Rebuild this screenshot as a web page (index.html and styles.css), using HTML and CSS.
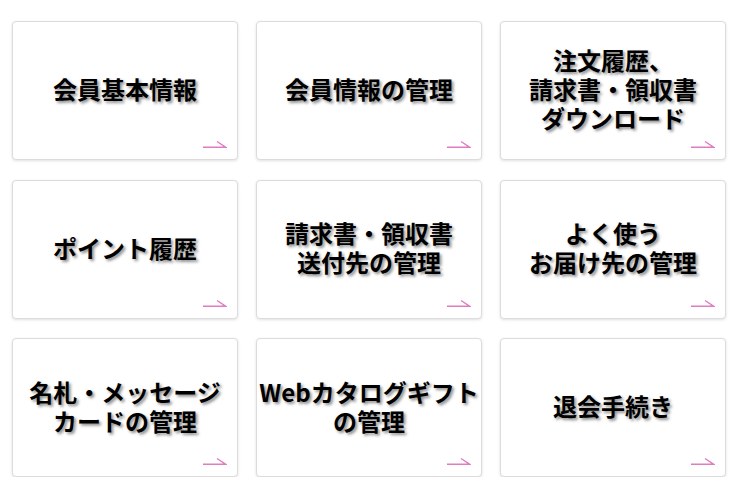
FILE: index.html
```html
<!DOCTYPE html>
<html lang="ja">
<head>
<meta charset="utf-8">
<link rel="stylesheet" href="styles.css">
</head>
<body>
<div class="grid">
  <a class="card"><span class="label">会員基本情報</span><svg class="arrow" viewBox="0 0 24 8"><path d="M0 7.2H22.5L14 1.5"/></svg></a>
  <a class="card"><span class="label">会員情報の管理</span><svg class="arrow" viewBox="0 0 24 8"><path d="M0 7.2H22.5L14 1.5"/></svg></a>
  <a class="card"><span class="label">注文履歴、<br>請求書・領収書<br>ダウンロード</span><svg class="arrow" viewBox="0 0 24 8"><path d="M0 7.2H22.5L14 1.5"/></svg></a>
  <a class="card"><span class="label">ポイント履歴</span><svg class="arrow" viewBox="0 0 24 8"><path d="M0 7.2H22.5L14 1.5"/></svg></a>
  <a class="card"><span class="label">請求書・領収書<br>送付先の管理</span><svg class="arrow" viewBox="0 0 24 8"><path d="M0 7.2H22.5L14 1.5"/></svg></a>
  <a class="card"><span class="label">よく使う<br>お届け先の管理</span><svg class="arrow" viewBox="0 0 24 8"><path d="M0 7.2H22.5L14 1.5"/></svg></a>
  <a class="card"><span class="label">名札・メッセージ<br>カードの管理</span><svg class="arrow" viewBox="0 0 24 8"><path d="M0 7.2H22.5L14 1.5"/></svg></a>
  <a class="card"><span class="label">Webカタログギフト<br>の管理</span><svg class="arrow" viewBox="0 0 24 8"><path d="M0 7.2H22.5L14 1.5"/></svg></a>
  <a class="card"><span class="label">退会手続き</span><svg class="arrow" viewBox="0 0 24 8"><path d="M0 7.2H22.5L14 1.5"/></svg></a>
</div>
</body>
</html>
```
FILE: styles.css
```css
html, body {
  margin: 0;
  padding: 0;
  background: #ffffff;
}
body {
  padding: 21px 12px 0 12px;
  font-family: "Noto Sans CJK JP", "Noto Sans", sans-serif;
}
.grid {
  display: grid;
  grid-template-columns: repeat(3, 226px);
  grid-auto-rows: 139px;
  column-gap: 18px;
  row-gap: 19.5px;
}
.card {
  position: relative;
  display: flex;
  align-items: center;
  justify-content: center;
  box-sizing: border-box;
  background: #fff;
  border: 1px solid #dcdcdc;
  border-radius: 4px;
  box-shadow: 0 1px 3px rgba(0, 0, 0, 0.12);
  text-decoration: none;
  color: #000;
}
.label {
  display: block;
  padding-bottom: 4px;
  font-size: 24px;
  font-weight: 700;
  line-height: 29px;
  text-align: center;
  color: #000;
  text-shadow: 2px 2px 3px rgba(0, 0, 0, 0.45);
}
.arrow {
  position: absolute;
  right: 10px;
  bottom: 11px;
  width: 24px;
  height: 8px;
  fill: none;
  stroke: #e07cc0;
  stroke-width: 1.4;
}
```
